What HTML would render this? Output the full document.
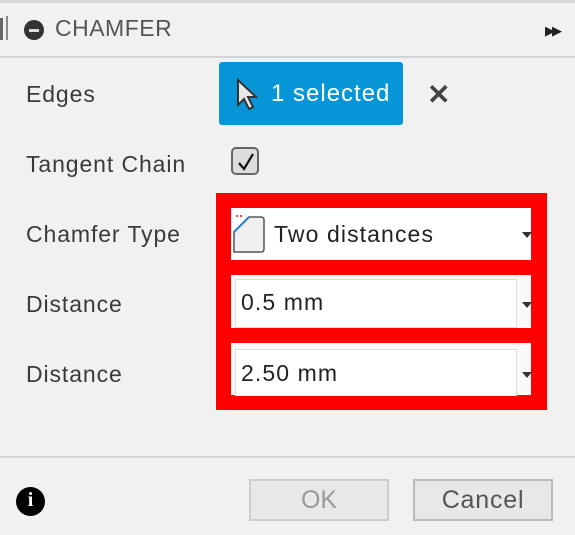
<!DOCTYPE html>
<html><head><style>
body{margin:0;width:575px;height:535px;background:#f1f1f1;position:relative;overflow:hidden;font-family:"Liberation Sans",Arial,sans-serif;color:#3c3c3c}
.a{position:absolute}
.lbl{position:absolute;left:26px;font-size:23px;letter-spacing:0.9px;color:#3a3a3a}
.sel{position:absolute;font-size:23px;letter-spacing:1.1px;color:#222}
.arr{position:absolute;width:0;height:0;border-left:5px solid transparent;border-right:5px solid transparent;border-top:6px solid #333}
</style></head><body>
<div class="a" style="left:0;top:0;width:575px;height:3px;background:#d6d6d6"></div>
<div class="a" style="left:0;top:56px;width:575px;height:2px;background:#d4d4d4"></div>
<div class="a" style="left:0;top:18px;width:3px;height:22px;background:#666"></div>
<div class="a" style="left:6px;top:16px;width:2px;height:24px;background:#888"></div>
<div class="a" style="left:24px;top:20px;width:20px;height:20px;border-radius:50%;background:#333"></div>
<div class="a" style="left:29px;top:29px;width:10px;height:3px;background:#ddd"></div>
<div class="a" style="left:55px;top:15px;font-size:23px;letter-spacing:0.5px;color:#555">CHAMFER</div>
<div class="a" style="left:545px;top:23px;font-size:13px;color:#222;letter-spacing:-3px">▶▶</div>

<div class="lbl" style="top:81px">Edges</div>
<div class="a" style="left:219px;top:62px;width:184px;height:63px;background:#0696d7;border-radius:3px"></div>
<svg class="a" style="left:236px;top:78px" width="24" height="34" viewBox="0 0 24 34"><path d="M2 2 L2 27 L8 21 L13 31 L17 29 L12 19 L20 19 Z" fill="#e8e8e8" stroke="#333" stroke-width="2"/></svg>
<div class="a" style="left:271px;top:80px;font-size:24px;letter-spacing:1px;color:#fff">1 selected</div>
<div class="a" style="left:427px;top:78px;font-size:28px;color:#444;font-weight:bold">✕</div>

<div class="lbl" style="top:151px">Tangent Chain</div>
<div class="a" style="left:231px;top:147px;width:28px;height:28px;border:2px solid #666;border-radius:5px;background:#ddd;box-sizing:border-box"></div>
<svg class="a" style="left:235px;top:151px" width="22" height="22"><path d="M4 12 L9 18 L18 3" fill="none" stroke="#111" stroke-width="2.2"/></svg>

<div class="lbl" style="top:221px">Chamfer Type</div>
<div class="lbl" style="top:291px">Distance</div>
<div class="lbl" style="top:361px">Distance</div>

<div class="a" style="left:216px;top:193px;width:331px;height:217px;background:#f00"></div>
<div class="a" style="left:231px;top:208px;width:300px;height:52px;background:#fff"></div>
<div class="a" style="left:231px;top:275px;width:300px;height:53px;background:#fafafa"></div>
<div class="a" style="left:235px;top:279px;width:280px;height:47px;background:#fff;border:1px solid #ddd"></div>
<div class="a" style="left:231px;top:343px;width:300px;height:52px;background:#fafafa"></div>
<div class="a" style="left:235px;top:349px;width:280px;height:46px;background:#fff;border:1px solid #ddd;border-bottom:none"></div>
<svg class="a" style="left:231px;top:212px" width="36" height="42"><path d="M3 40 L3 20 L18 5 L30 5 Q33 5 33 8 L33 37 Q33 40 30 40 Z" fill="#f0f0f0" stroke="#555" stroke-width="1.5"/><path d="M3 20 L18 5" stroke="#2a7fd0" stroke-width="2"/><path d="M5 4 L13 4" stroke="#e00" stroke-width="1.5" stroke-dasharray="2 2"/></svg>
<div class="sel" style="left:274px;top:221px">Two distances</div>
<div class="sel" style="left:241px;top:289px">0.5 mm</div>
<div class="sel" style="left:241px;top:360px">2.50 mm</div>
<div class="arr" style="left:522px;top:232px"></div>
<div class="arr" style="left:522px;top:302px"></div>
<div class="arr" style="left:522px;top:372px"></div>

<div class="a" style="left:0;top:456px;width:575px;height:2px;background:#d4d4d4"></div>
<div class="a" style="left:16px;top:487px;width:29px;height:29px;border-radius:50%;background:#000"></div>
<div class="a" style="left:16px;top:489px;width:29px;text-align:center;color:#fff;font-weight:bold;font-size:20px;font-family:'Liberation Serif',serif">i</div>
<div class="a" style="left:249px;top:479px;width:140px;height:42px;border:2px solid #ccc;background:#e8e8e8;box-sizing:border-box;text-align:center;line-height:38px;font-size:25px;color:#999">OK</div>
<div class="a" style="left:413px;top:479px;width:140px;height:42px;border:2px solid #bbb;background:#e8e8e8;box-sizing:border-box;text-align:center;line-height:38px;font-size:25px;letter-spacing:0.8px;color:#555">Cancel</div>
</body></html>
